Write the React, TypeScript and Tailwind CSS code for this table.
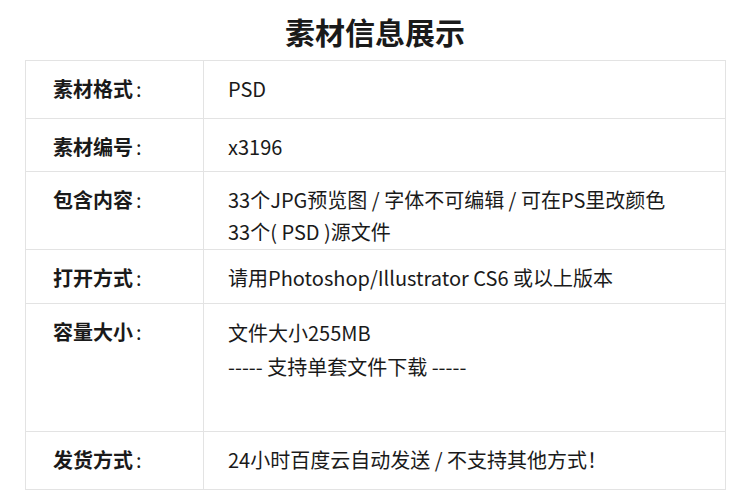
const rows: { label: string; lines: string[]; h: string; lead: string }[] = [
  { label: '素材格式', lines: ['PSD'], h: 'h-[57px]', lead: 'leading-[32px]' },
  { label: '素材编号', lines: ['x3196'], h: 'h-[53px]', lead: 'leading-[32px]' },
  {
    label: '包含内容',
    lines: ['33个JPG预览图 / 字体不可编辑 / 可在PS里改颜色', '33个( PSD )源文件'],
    h: 'h-[78px]',
    lead: 'leading-[32px]',
  },
  { label: '打开方式', lines: ['请用Photoshop/Illustrator CS6 或以上版本'], h: 'h-[54px]', lead: 'leading-[32px]' },
  {
    label: '容量大小',
    lines: ['文件大小255MB', '----- 支持单套文件下载 -----'],
    h: 'h-[128px]',
    lead: 'leading-[34px]',
  },
  { label: '发货方式', lines: ['24小时百度云自动发送 / 不支持其他方式！'], h: 'h-[58px]', lead: 'leading-[32px]' },
]

export default function App() {
  return (
    <div className="w-[750px] h-[500px] bg-white text-[#1a1a1a] font-['Noto_Sans_CJK_SC','Noto_Sans',sans-serif]">
      <h1 className="h-[60px] pt-[2px] flex items-center justify-center text-[30px] font-bold">
        素材信息展示
      </h1>
      <div className="ml-[25px] w-[701px] border border-[#e3e3e3]">
        {rows.map((r, i) => (
          <div
            key={r.label}
            className={[
              'flex',
              r.h,
              i > 0 ? 'border-t border-[#e3e3e3]' : '',
            ].join(' ')}
          >
            <div className="w-[178px] shrink-0 border-r border-[#e3e3e3] pl-[27px] pt-[12px] text-[20px] leading-[32px]">
              <span className="font-semibold">{r.label}</span>
              <span className="font-normal ml-[3px]">:</span>
            </div>
            <div className={['pl-[24px] pt-[12px] text-[20px]', r.lead].join(' ')}>
              {r.lines.map((l) => (
                <div key={l}>{l}</div>
              ))}
            </div>
          </div>
        ))}
      </div>
    </div>
  )
}
